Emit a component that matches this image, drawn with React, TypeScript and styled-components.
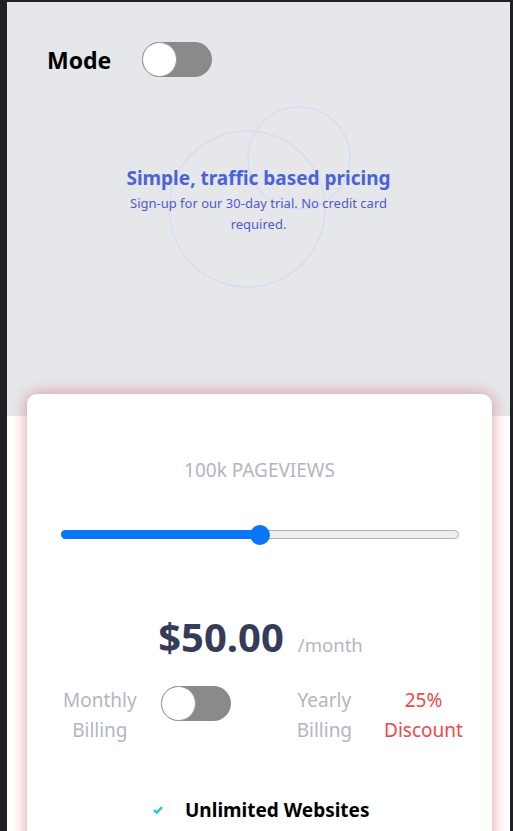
import React, { useState } from "react";
import styled, { createGlobalStyle } from "styled-components";

const GlobalStyle = createGlobalStyle`
  html, body {
    margin: 0;
    padding: 0;
    background: #202124;
    overflow: hidden;
  }
  body {
    font-family: "Noto Sans", "Open Sans", sans-serif;
  }
`;

const Frame = styled.div`
  padding: 2px 3px 0 7px;
  height: 831px;
  box-sizing: border-box;
`;

const Page = styled.div`
  background: #fff;
  height: 100%;
  overflow: hidden;
`;

const Hero = styled.div`
  position: relative;
  height: 414px;
  background: #e6e7eb;
  padding-top: 40px;
  box-sizing: border-box;
`;

const ModeRow = styled.div`
  display: flex;
  align-items: center;
  gap: 31px;
  padding-left: 40px;
  position: relative;
  z-index: 1;
`;

const ModeLabel = styled.span`
  font-size: 23px;
  font-weight: 700;
  color: #000;
`;

const Toggle = styled.button<{ $on: boolean }>`
  position: relative;
  flex-shrink: 0;
  width: 70px;
  height: 35px;
  padding: 0;
  border: none;
  border-radius: 18px;
  background: ${(p) => (p.$on ? "#4a63d8" : "#8a8a8a")};
  cursor: pointer;
  &::after {
    content: "";
    position: absolute;
    top: 0;
    left: ${(p) => (p.$on ? "35px" : "0")};
    width: 33px;
    height: 33px;
    border-radius: 50%;
    background: #fff;
    border: 1px solid #999;
  }
`;

const Circles = styled.svg`
  position: absolute;
  left: 0;
  top: 0;
  pointer-events: none;
`;

const Heading = styled.div`
  position: relative;
  width: 270px;
  margin: 88px auto 0;
  text-align: center;
`;

const Title = styled.h1`
  margin: 0;
  font-size: 19px;
  font-weight: 700;
  color: #4a63d8;
  white-space: nowrap;
`;

const Subtitle = styled.p`
  margin: 2px 0 0;
  font-size: 13px;
  line-height: 21px;
  color: #5357cf;
`;

const Card = styled.div`
  margin: -22px 18px 0 20px;
  position: relative;
  background: #fff;
  border-radius: 10px;
  box-shadow: 0 0 16px rgba(210, 100, 100, 0.65);
  padding: 63px 0 0;
  height: 600px;
`;

const Views = styled.div`
  text-align: center;
  font-size: 19px;
  color: #b3b5c3;
`;

const SliderWrap = styled.div`
  position: relative;
  margin: 42px 33px 0 34px;
  height: 20px;
`;

const Track = styled.div`
  position: absolute;
  left: 0;
  right: 0;
  top: 5px;
  height: 9px;
  border-radius: 5px;
  background: #efefef;
  border: 1px solid #b0b0b0;
  box-sizing: border-box;
`;

const Fill = styled.div`
  position: absolute;
  left: 0;
  top: 5px;
  height: 9px;
  border-radius: 5px;
  background: #0a76f6;
`;

const Thumb = styled.div`
  position: absolute;
  top: 0;
  width: 20px;
  height: 20px;
  margin-left: -10px;
  border-radius: 50%;
  background: #0a76f6;
`;

const PriceRow = styled.div`
  display: flex;
  justify-content: center;
  align-items: baseline;
  gap: 14px;
  margin-top: 64px;
  padding-left: 2px;
`;

const Price = styled.span`
  font-size: 40px;
  font-weight: 700;
  color: #353c5a;
`;

const Per = styled.span`
  font-size: 18.5px;
  color: #b3b5c3;
`;

const BillingRow = styled.div`
  display: flex;
  align-items: flex-start;
  margin-top: 21px;
  padding-left: 36px;
`;

const BillText = styled.div<{ $red?: boolean; $gap?: number }>`
  text-align: center;
  font-size: 19px;
  line-height: 30px;
  margin-left: ${(p) => p.$gap ?? 0}px;
  color: ${(p) => (p.$red ? "#f04848" : "#b3b5c3")};
`;

const BillToggle = styled(Toggle)`
  margin: 1px 0 0 24px;
`;

const Features = styled.ul`
  list-style: none;
  margin: 52px 0 0;
  padding: 0 0 0 126px;
`;

const Feature = styled.li`
  display: flex;
  align-items: center;
  gap: 22px;
  font-size: 19px;
  font-weight: 700;
  color: #000;
`;

const App = () => {
  const [mode, setMode] = useState(false);
  const [yearly, setYearly] = useState(false);
  const [value] = useState(50);

  return (
    <Frame>
      <GlobalStyle />
      <Page>
        <Hero>
          <Circles width="503" height="414">
            <circle cx="240" cy="207" r="78" fill="none" stroke="#d6dcf3" strokeWidth="1.5" />
            <circle cx="292" cy="156" r="51" fill="none" stroke="#d6dcf3" strokeWidth="1.5" />
          </Circles>
          <ModeRow>
            <ModeLabel>Mode</ModeLabel>
            <Toggle $on={mode} onClick={() => setMode(!mode)} />
          </ModeRow>
          <Heading>
            <Title>Simple, traffic based pricing</Title>
            <Subtitle>Sign-up for our 30-day trial. No credit card required.</Subtitle>
          </Heading>
        </Hero>
        <Card>
          <Views>100k PAGEVIEWS</Views>
          <SliderWrap>
            <Track />
            <Fill style={{ width: `${value}%` }} />
            <Thumb style={{ left: `${value}%` }} />
          </SliderWrap>
          <PriceRow>
            <Price>$50.00</Price>
            <Per>/month</Per>
          </PriceRow>
          <BillingRow>
            <BillText>
              Monthly
              <br />
              Billing
            </BillText>
            <BillToggle $on={yearly} onClick={() => setYearly(!yearly)} />
            <BillText $gap={66}>
              Yearly
              <br />
              Billing
            </BillText>
            <BillText $gap={32} $red>
              25%
              <br />
              Discount
            </BillText>
          </BillingRow>
          <Features>
            <Feature>
              <svg width="10" height="8" viewBox="0 0 10 8">
                <path d="M1 4.2 L3.8 6.6 L9 1.2" fill="none" stroke="#22c9be" strokeWidth="2.4" />
              </svg>
              Unlimited Websites
            </Feature>
          </Features>
        </Card>
      </Page>
    </Frame>
  );
};

export default App;
